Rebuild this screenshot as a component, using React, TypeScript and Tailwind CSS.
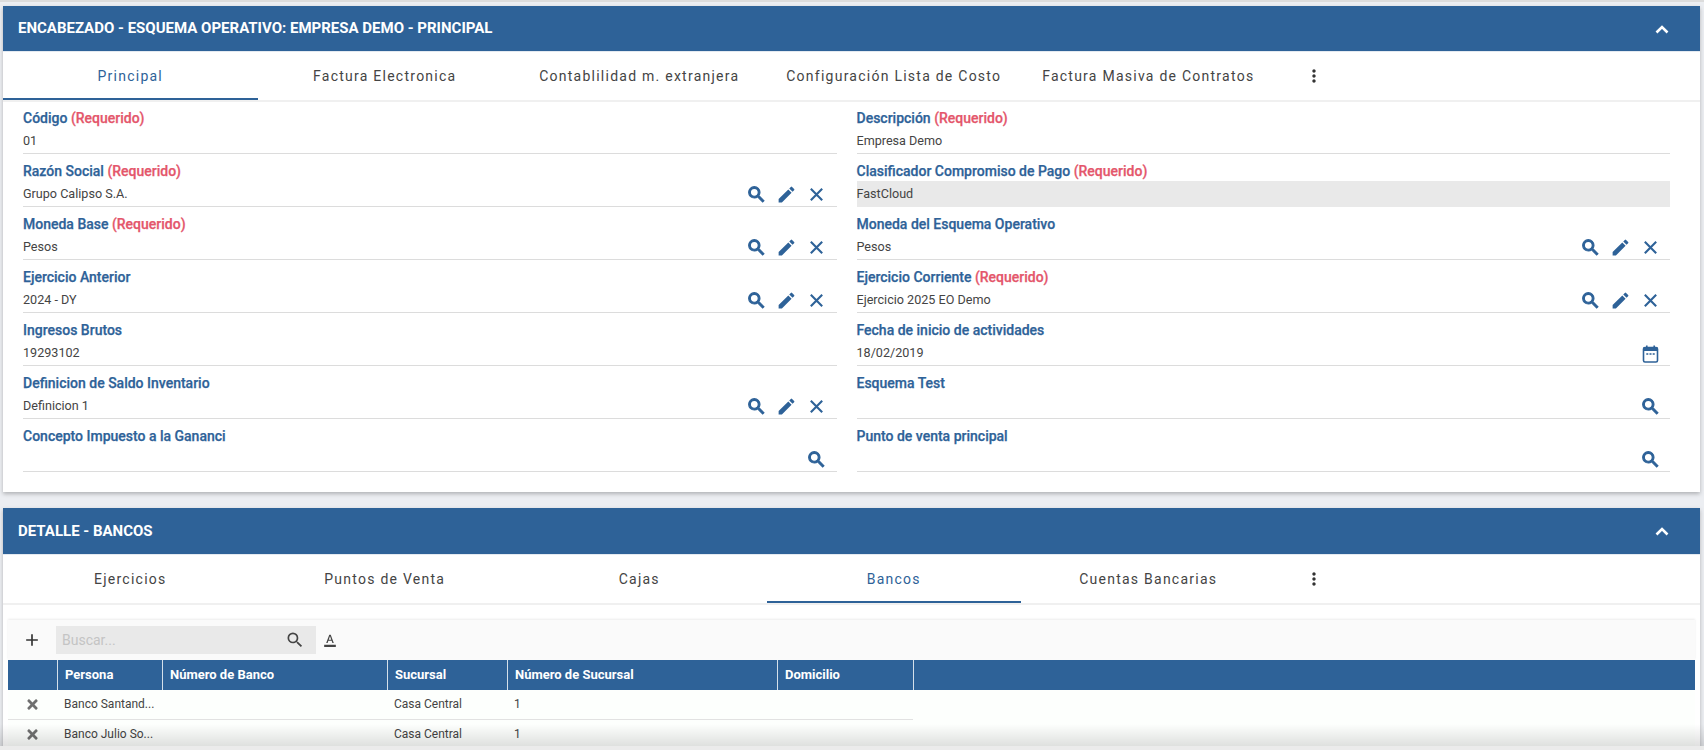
import { FaTimes } from 'react-icons/fa';
import {
  MdAdd,
  MdEdit,
  MdFormatColorText,
  MdMoreVert,
  MdOutlineSearch,
} from 'react-icons/md';

type FieldProps = {
  label: string;
  required?: boolean;
  value?: string;
  actions?: 'all' | 'search' | 'date';
  disabled?: boolean;
};

const leftFields: FieldProps[] = [
  { label: 'Código', required: true, value: '01' },
  { label: 'Razón Social', required: true, value: 'Grupo Calipso S.A.', actions: 'all' },
  { label: 'Moneda Base', required: true, value: 'Pesos', actions: 'all' },
  { label: 'Ejercicio Anterior', value: '2024 - DY', actions: 'all' },
  { label: 'Ingresos Brutos', value: '19293102' },
  { label: 'Definicion de Saldo Inventario', value: 'Definicion 1', actions: 'all' },
  { label: 'Concepto Impuesto a la Gananci', actions: 'search' },
];

const rightFields: FieldProps[] = [
  { label: 'Descripción', required: true, value: 'Empresa Demo' },
  { label: 'Clasificador Compromiso de Pago', required: true, value: 'FastCloud', disabled: true },
  { label: 'Moneda del Esquema Operativo', value: 'Pesos', actions: 'all' },
  { label: 'Ejercicio Corriente', required: true, value: 'Ejercicio 2025 EO Demo', actions: 'all' },
  { label: 'Fecha de inicio de actividades', value: '18/02/2019', actions: 'date' },
  { label: 'Esquema Test', actions: 'search' },
  { label: 'Punto de venta principal', actions: 'search' },
];

const bancos = [
  { persona: 'Banco Santand...', sucursal: 'Casa Central', numero: '1' },
  { persona: 'Banco Julio So...', sucursal: 'Casa Central', numero: '1' },
];

// material search with a heavier outline, as in the app
function SearchIcon() {
  return (
    <svg width="21" height="21" viewBox="0 0 24 24" fill="currentColor" stroke="currentColor" strokeWidth="1.3">
      <path d="M15.5 14h-.79l-.28-.27A6.471 6.471 0 0 0 16 9.5 6.5 6.5 0 1 0 9.5 16c1.61 0 3.09-.59 4.23-1.57l.27.28v.79l5 4.99L20.49 19l-4.99-5zm-6 0C7.01 14 5 11.99 5 9.5S7.01 5 9.5 5 14 7.01 14 9.5 11.99 14 9.5 14z" />
    </svg>
  );
}

function CloseIcon() {
  return (
    <svg width="21" height="21" viewBox="0 0 24 24" fill="none" stroke="currentColor" strokeWidth="2.4">
      <path d="M5.5 5.5l13 13M18.5 5.5l-13 13" />
    </svg>
  );
}

function ChevronIcon() {
  return (
    <svg width="24" height="24" viewBox="0 0 24 24" fill="none" stroke="currentColor" strokeWidth="2.6">
      <path d="M6.5 15.5l5.5-5.5 5.5 5.5" />
    </svg>
  );
}

function CalendarIcon() {
  return (
    <svg width="17" height="18" viewBox="0 0 17 18" fill="none">
      <rect x="1.5" y="2.5" width="14" height="14.5" rx="1.5" fill="#ffffff" stroke="#2e6298" strokeWidth="1.6" />
      <rect x="1.5" y="2.5" width="14" height="3.5" fill="#2e6298" />
      <rect x="4" y="0.5" width="1.6" height="3" fill="#2e6298" />
      <rect x="11.4" y="0.5" width="1.6" height="3" fill="#2e6298" />
      <rect x="4.3" y="8" width="2" height="2" fill="#5f86ae" />
      <rect x="7.5" y="8" width="2" height="2" fill="#5f86ae" />
      <rect x="10.7" y="8" width="2" height="2" fill="#5f86ae" />
    </svg>
  );
}

function Field({ label, required, value, actions, disabled }: FieldProps) {
  return (
    <div className="h-[53px] flex flex-col">
      <div className="h-[27px] pt-[7.5px] text-[14px] leading-[18px] font-medium text-[#2e6298] [-webkit-text-stroke:0.25px_#2e6298]">
        {label}
        {required && <span className="text-[#e4566b] [-webkit-text-stroke:0.25px_#e4566b]"> (Requerido)</span>}
      </div>
      <div
        className={
          disabled
            ? 'h-[26px] flex items-center bg-[#e9e9e9]'
            : 'h-[26px] pt-[2px] flex items-center border-b border-[#dcdcdc]'
        }
      >
        <span className="flex-1 text-[12.6px] text-[#444444]">{value}</span>
        {actions === 'all' && (
          <div className="flex w-[95px] pr-[5px] text-[#2e6298]">
            <span className="w-[30px] flex justify-center">
              <SearchIcon />
            </span>
            <span className="w-[30px] flex justify-center">
              <MdEdit size={21} />
            </span>
            <span className="w-[30px] flex justify-center">
              <CloseIcon />
            </span>
          </div>
        )}
        {actions === 'search' && (
          <span className="w-[30px] mr-[5px] flex justify-center text-[#2e6298]">
            <SearchIcon />
          </span>
        )}
        {actions === 'date' && (
          <span className="w-[30px] mr-[5px] flex justify-center">
            <CalendarIcon />
          </span>
        )}
      </div>
    </div>
  );
}

function CardHeader({ title, tall }: { title: string; tall?: boolean }) {
  return (
    <div
      className={
        tall
          ? 'h-[46px] flex items-center justify-between bg-[#2e6298] pl-[15px] pr-[26px] text-white'
          : 'h-[45px] flex items-center justify-between bg-[#2e6298] pl-[15px] pr-[26px] text-white'
      }
    >
      <span className="text-[15px] font-bold">{title}</span>
      <ChevronIcon />
    </div>
  );
}

function Tabs({ tabs, active }: { tabs: string[]; active: string }) {
  return (
    <div className="h-[51px] -mb-px flex border-t border-t-[#e4eaf1] border-b-2 border-b-[#f0f0f0]">
      {tabs.map((tab) => (
        <div
          key={tab}
          className={
            tab === active
              ? 'w-[254.5px] flex items-center justify-center border-y-2 border-t-transparent border-b-[#2e6298] text-[14px] tracking-[1.25px] text-[#2e6298]'
              : 'w-[254.5px] flex items-center justify-center text-[14px] tracking-[1.25px] text-[#444444]'
          }
        >
          {tab}
        </div>
      ))}
      <div className="w-[76px] flex items-center justify-center text-[#333333]">
        <MdMoreVert size={20} />
      </div>
    </div>
  );
}

export default function App() {
  return (
    <div className="relative h-[750px] overflow-hidden bg-[#eceef2] font-['Roboto',sans-serif] border-t-2 border-t-[#dcdcdc]">
      <div className="mx-[3px] mr-[4px] mt-[4px] bg-white shadow-[0_2px_4px_rgba(0,0,0,0.25)]">
        <CardHeader title="ENCABEZADO - ESQUEMA OPERATIVO: EMPRESA DEMO - PRINCIPAL" />
        <Tabs
          active="Principal"
          tabs={['Principal', 'Factura Electronica', 'Contablilidad m. extranjera', 'Configuración Lista de Costo', 'Factura Masiva de Contratos']}
        />
        <div className="grid grid-cols-2 gap-x-[20px] pl-[20px] pr-[30px] pb-[20px]">
          <div>
            {leftFields.map((f) => (
              <Field key={f.label} {...f} />
            ))}
          </div>
          <div>
            {rightFields.map((f) => (
              <Field key={f.label} {...f} />
            ))}
          </div>
        </div>
      </div>

      <div className="mx-[3px] mr-[4px] mt-[16px] h-[300px] bg-white shadow-[0_2px_4px_rgba(0,0,0,0.25)]">
        <CardHeader title="DETALLE - BANCOS" tall />
        <Tabs active="Bancos" tabs={['Ejercicios', 'Puntos de Venta', 'Cajas', 'Bancos', 'Cuentas Bancarias']} />

        <div className="mt-[16px] ml-[5px] mr-[5px] h-[200px] bg-[#fdfffd]">
          <div className="h-[40px] flex items-center bg-[#fafafa] shadow-[0_-1px_2px_rgba(0,0,0,0.08)]">
            <span className="w-[48px] flex justify-center text-[#333333]">
              <MdAdd size={20} />
            </span>
            <div className="h-[28px] w-[260px] flex items-center justify-between bg-[#e9e9e9] pl-[6px] pr-[11px]">
              <span className="text-[14px] text-[#c4c4c4]">Buscar...</span>
              <MdOutlineSearch size={20} className="text-[#444444]" />
            </div>
            <MdFormatColorText size={14} className="ml-[7px] text-[#444444]" />
          </div>

          <div className="h-[30px] grid grid-cols-[49px_105px_225px_120px_270px_136px_1fr] bg-[#2e6298] text-[13px] font-bold text-white">
            <div />
            {['Persona', 'Número de Banco', 'Sucursal', 'Número de Sucursal', 'Domicilio', ''].map((col, i) => (
              <div key={i} className="flex items-center border-l border-white/80 pl-[7px]">
                {col}
              </div>
            ))}
          </div>

          {bancos.map((row) => (
            <div
              key={row.persona}
              className="h-[30px] pb-[1px] w-[905px] grid grid-cols-[49px_105px_225px_120px_270px_136px] items-center border-b border-[#e2e2e2] text-[12px] text-[#444444]"
            >
              <span className="flex justify-center text-[#707070]">
                <FaTimes size={15} />
              </span>
              <span className="pl-[7px]">{row.persona}</span>
              <span />
              <span className="pl-[7px]">{row.sucursal}</span>
              <span className="pl-[7px]">{row.numero}</span>
              <span />
            </div>
          ))}
        </div>
      </div>

      <div className="absolute inset-x-0 bottom-0 h-[4px] bg-[#ebebeb]" />
      <div className="absolute inset-x-0 bottom-[4px] h-[22px] bg-gradient-to-b from-transparent to-[#0000001f]" />
    </div>
  );
}
